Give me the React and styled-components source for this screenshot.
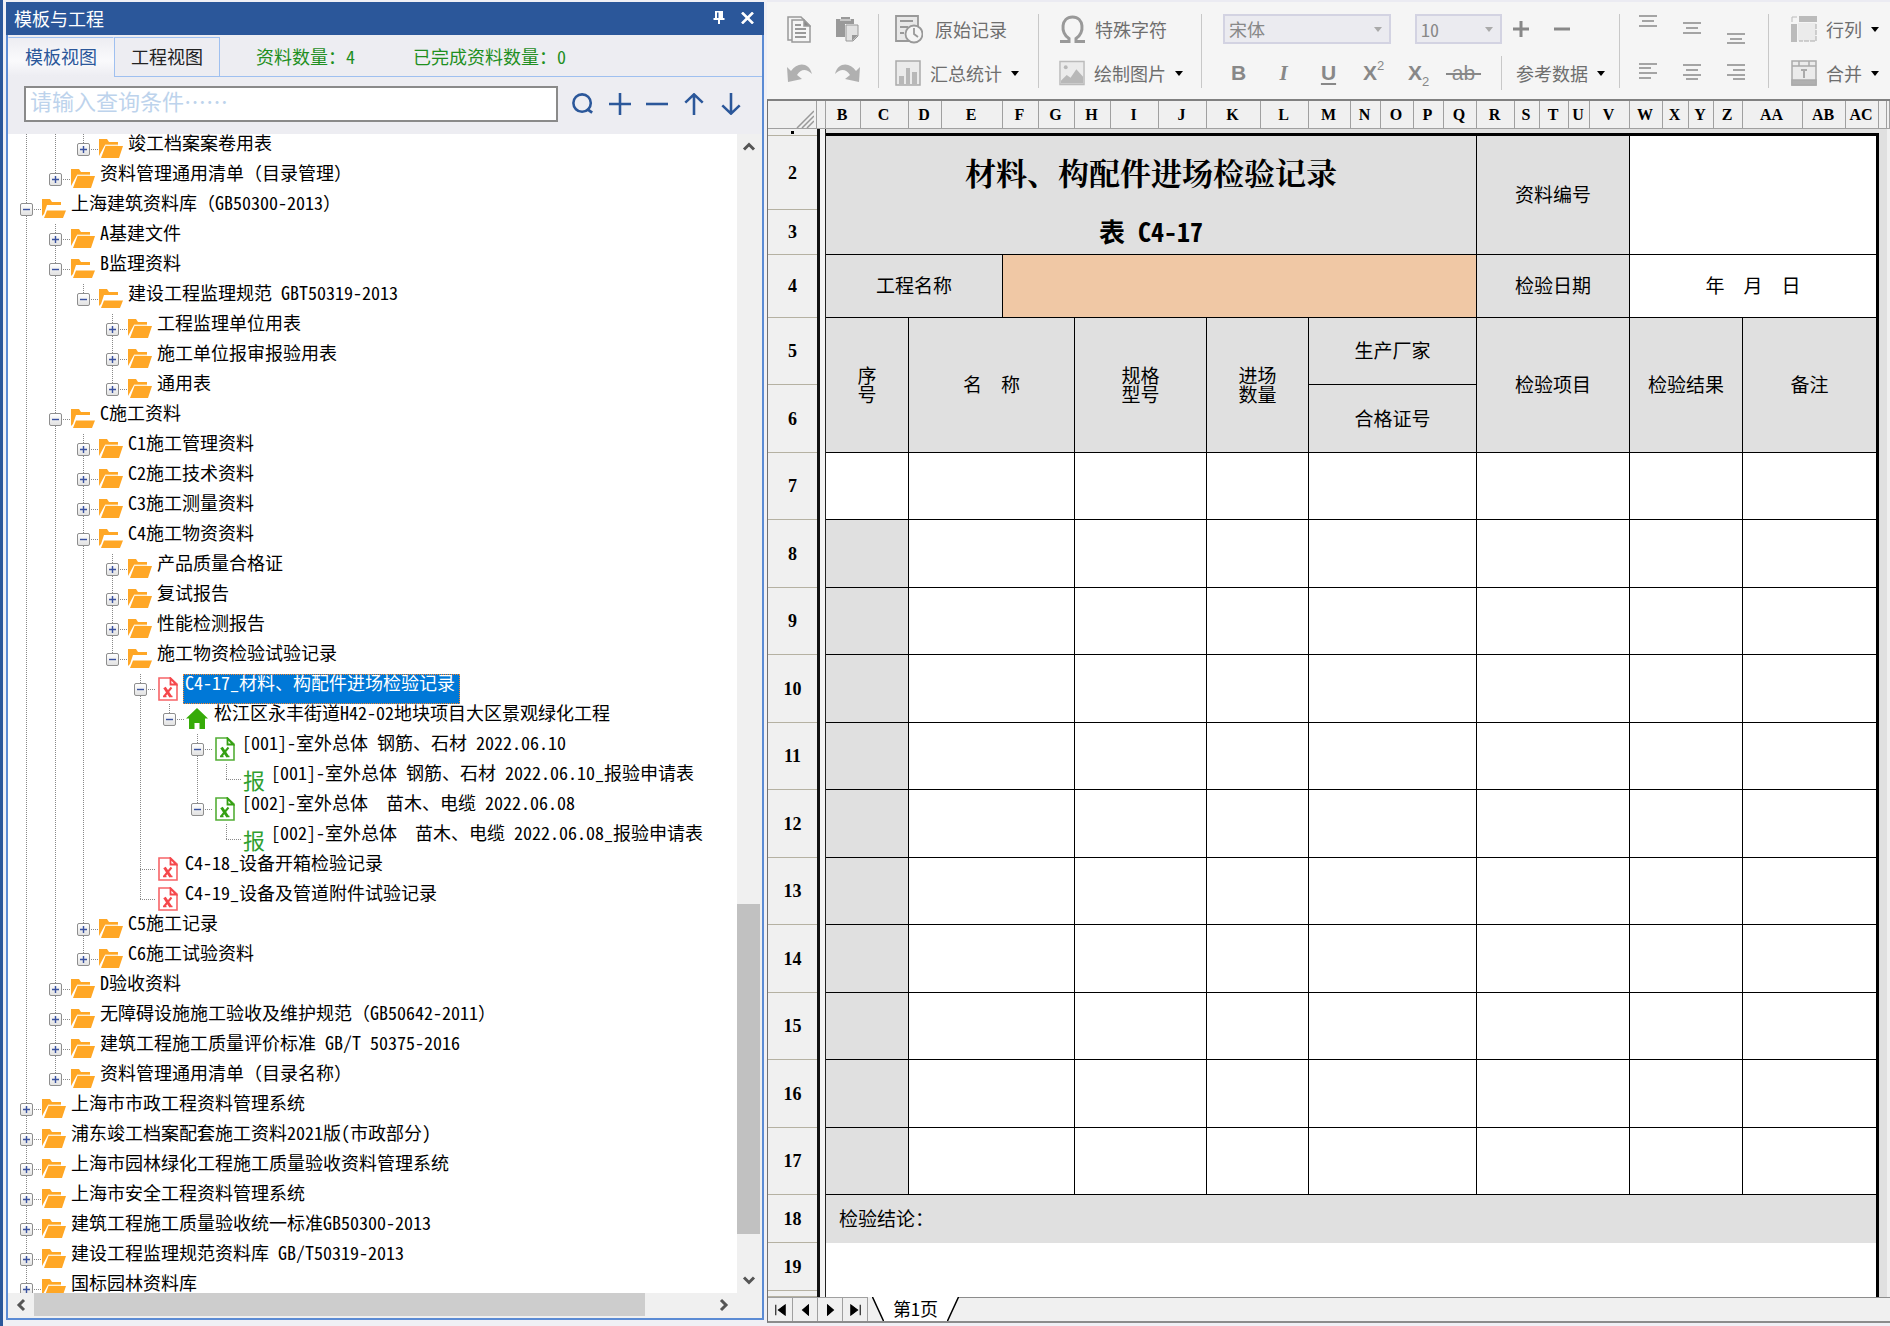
import React, { useState } from "react";
import styled, { createGlobalStyle, css } from "styled-components";

const GlobalStyle = createGlobalStyle`
* { box-sizing: border-box; }
body {
  margin: 0;
  background: #f0f0f5;
  font-family: "Noto Sans Mono CJK SC", "Noto Sans CJK SC", monospace;
  font-size: 18px;
  line-height: 18px;
}
button, input, select {
  font: inherit;
  color: inherit;
  margin: 0;
  padding: 0;
  border: 0;
  background: none;
}
`;

const TREE = [
  [2, "closed", "竣工档案案卷用表"],
  [1, "closed", "资料管理通用清单（目录管理）"],
  [0, "open", "上海建筑资料库（GB50300-2013）"],
  [1, "closed", "A基建文件"],
  [1, "open", "B监理资料"],
  [2, "open", "建设工程监理规范 GBT50319-2013"],
  [3, "closed", "工程监理单位用表"],
  [3, "closed", "施工单位报审报验用表"],
  [3, "closed", "通用表"],
  [1, "open", "C施工资料"],
  [2, "closed", "C1施工管理资料"],
  [2, "closed", "C2施工技术资料"],
  [2, "closed", "C3施工测量资料"],
  [2, "open", "C4施工物资资料"],
  [3, "closed", "产品质量合格证"],
  [3, "closed", "复试报告"],
  [3, "closed", "性能检测报告"],
  [3, "open", "施工物资检验试验记录"],
  [4, "red", "C4-17_材料、构配件进场检验记录", "minus"],
  [5, "home", "松江区永丰街道H42-02地块项目大区景观绿化工程", "minus"],
  [6, "green", "[001]-室外总体 钢筋、石材 2022.06.10", "minus"],
  [7, "report", "[001]-室外总体 钢筋、石材 2022.06.10_报验申请表"],
  [6, "green", "[002]-室外总体  苗木、电缆 2022.06.08", "minus"],
  [7, "report", "[002]-室外总体  苗木、电缆 2022.06.08_报验申请表"],
  [4, "red", "C4-18_设备开箱检验记录"],
  [4, "red", "C4-19_设备及管道附件试验记录"],
  [2, "closed", "C5施工记录"],
  [2, "closed", "C6施工试验资料"],
  [1, "closed", "D验收资料"],
  [1, "closed", "无障碍设施施工验收及维护规范（GB50642-2011）"],
  [1, "closed", "建筑工程施工质量评价标准 GB/T 50375-2016"],
  [1, "closed", "资料管理通用清单（目录名称）"],
  [0, "closed", "上海市市政工程资料管理系统"],
  [0, "closed", "浦东竣工档案配套施工资料2021版(市政部分)"],
  [0, "closed", "上海市园林绿化工程施工质量验收资料管理系统"],
  [0, "closed", "上海市安全工程资料管理系统"],
  [0, "closed", "建筑工程施工质量验收统一标准GB50300-2013"],
  [0, "closed", "建设工程监理规范资料库 GB/T50319-2013"],
  [0, "closed", "国标园林资料库"],
];

const COLUMNS = [
  ["B", 35], ["C", 48], ["D", 33], ["E", 61], ["F", 36], ["G", 36], ["H", 36],
  ["I", 48], ["J", 48], ["K", 54], ["L", 48], ["M", 42], ["N", 30], ["O", 33],
  ["P", 30], ["Q", 33], ["R", 38], ["S", 25], ["T", 29], ["U", 21], ["V", 40],
  ["W", 33], ["X", 26], ["Y", 25], ["Z", 29], ["AA", 60], ["AB", 43], ["AC", 33],
];

// column spans of the record rows
const SPANS = [2, 4, 3, 2, 5, 5, 4, 3];

// does a line at this level carry on below the given row
function continues(index, level) {
  for (let i = index + 1; i < TREE.length; i++) {
    if (TREE[i][0] < level) return false;
    if (TREE[i][0] === level) return true;
  }
  return level === 0;
}

function NodeIcon({ kind }) {
  if (kind === "closed") {
    return (
      <svg width="24" height="19" viewBox="0 0 24 19" fill="#ffa726">
        <path d="M0 0h8l2 3h9v3H6L0 17z" />
        <path d="M6.500 7H24l-4 12H2z" />
        <path d="M6 6h13" stroke="#ffe2b0" />
      </svg>
    );
  }
  if (kind === "open") {
    return (
      <svg width="24" height="19" viewBox="0 0 24 19" fill="#ffa726">
        <path d="M0 0h8l2 3h9v3H5L2 15l-2 2z" />
        <path d="M5 11.500h19l-3 7.500H2z" />
      </svg>
    );
  }
  if (kind === "home") {
    return (
      <svg width="22" height="21" viewBox="0 0 22 21" fill="#36ab08">
        <path d="M11 0l11 10.500h-3V21h-5.500v-6h-5v6H3V10.500H0z" />
      </svg>
    );
  }
  if (kind === "report") return <Report>报</Report>;
  const color = kind === "red" ? "#f5474b" : "#35a012";
  return (
    <svg width="20" height="24" viewBox="0 0 20 24" fill="none" stroke={color}>
      <path d="M1 1h11.500L19 7v16H1z" strokeWidth="1.600" opacity="0.850" />
      <path d="M12.500 1.500v6H18z" strokeWidth="1.800" />
      <path d="M6.500 10.500l6 9" strokeWidth="3" />
      <path d="M13.500 10.500l-7.500 9" strokeWidth="2" />
      <path d="M5 19.500h3.500M11 19.500h3.500" strokeWidth="1.500" />
    </svg>
  );
}

function TreeRow({ node, index, selected, onSelect }) {
  const [level, kind, label, sign] = node;
  const toggle = sign || { open: "minus", closed: "plus" }[kind];
  const parents = [];
  for (let k = 0; k < level; k++) parents.push(k);

  return (
    <Row role="treeitem" aria-level={level + 1} aria-selected={selected}>
      {parents.map((k) => (
        <Guide key={k} $wide={k % 2 === 0} $line={continues(index, k) ? "100%" : "0"} />
      ))}
      <Branch $line={continues(index, level) ? "100%" : "50%"}>
        {toggle && (
          <Toggle aria-label={toggle === "plus" ? "展开" : "折叠"}>
            <svg width="7" height="7" stroke="#3a529f" strokeWidth="1.400">
              <path d={toggle === "plus" ? "M0 3.500h7M3.500 0v7" : "M0 3.500h7"} />
            </svg>
          </Toggle>
        )}
      </Branch>
      <IconBox><NodeIcon kind={kind} /></IconBox>
      <Label $selected={selected} onClick={onSelect}>{label}</Label>
    </Row>
  );
}

function Arrow({ d }) {
  return (
    <svg width="14" height="14" viewBox="0 0 14 14" fill="none" stroke="#555" strokeWidth="3">
      <path d={d} />
    </svg>
  );
}

function SidePanel() {
  const [selected, setSelected] = useState(18);
  const [query, setQuery] = useState("");

  return (
    <Side>
      <Panel>
        <PanelTitle>
          <TitleText>模板与工程</TitleText>
          <TitleButton aria-label="固定">
            <svg width="12" height="13" viewBox="0 0 12 13" fill="#fff">
              <path d="M2 0h8v7h1.500v2H7v4H5V9H.5V7H2zM4 1.500V7h1.500V1.500z" fillRule="evenodd" />
            </svg>
          </TitleButton>
          <TitleButton aria-label="关闭">
            <svg width="13" height="12" viewBox="0 0 13 12" stroke="#fff" strokeWidth="2.600">
              <path d="M1 .5l11 11M12 .5l-11 11" />
            </svg>
          </TitleButton>
        </PanelTitle>
        <Tabs>
          <Tab $active>模板视图</Tab>
          <Tab>工程视图</Tab>
          <Stats>
            <span>资料数量：4</span>
            <span>已完成资料数量：0</span>
          </Stats>
        </Tabs>
        <SearchRow>
          <SearchInput
            aria-label="查询条件"
            placeholder="请输入查询条件……"
            value={query}
            onChange={(e) => setQuery(e.target.value)}
          />
          <SearchButton aria-label="查询">
            <svg {...searchIcon}>
              <circle cx="11" cy="11" r="9.500" />
              <path d="M16.500 17.500l5.500 4" strokeWidth="3" />
            </svg>
          </SearchButton>
          <SearchButton aria-label="添加">
            <svg {...searchIcon}><path d="M0 12h24M12 0v24" /></svg>
          </SearchButton>
          <SearchButton aria-label="删除">
            <svg {...searchIcon}><path d="M0 12h24" /></svg>
          </SearchButton>
          <SearchButton aria-label="上移">
            <svg {...searchIcon}><path d="M12 24V2M2.500 10.500L12 1.500l9.500 9" /></svg>
          </SearchButton>
          <SearchButton aria-label="下移">
            <svg {...searchIcon}><path d="M12 0v22M2.500 13.500l9.500 9 9.500-9" /></svg>
          </SearchButton>
        </SearchRow>
        <TreeArea>
          <Tree role="tree">
            {TREE.map((node, i) => (
              <TreeRow
                key={i}
                node={node}
                index={i}
                selected={selected === i}
                onSelect={() => setSelected(i)}
              />
            ))}
          </Tree>
          <VScroll>
            <ScrollButton aria-label="向上"><Arrow d="M2 9.500l5-5 5 5" /></ScrollButton>
            <Track $grow={741} />
            <Track $grow={329} $color="#c1c1c1" />
            <Track $grow={33} />
            <ScrollButton aria-label="向下"><Arrow d="M2 4.500l5 5 5-5" /></ScrollButton>
          </VScroll>
        </TreeArea>
        <HScroll>
          <ScrollButton aria-label="向左"><Arrow d="M10 2L5 7l5 5" /></ScrollButton>
          <Track $grow={609} $color="#cdcdcd" />
          <Track $grow={66} />
          <ScrollButton aria-label="向右"><Arrow d="M4 2l5 5-5 5" /></ScrollButton>
          <Corner />
        </HScroll>
      </Panel>
    </Side>
  );
}

const searchIcon = {
  width: 22,
  height: 22,
  viewBox: "0 0 24 24",
  fill: "none",
  stroke: "#2b579a",
  strokeWidth: 2.8,
};

function Caret({ color = "#000" }) {
  return (
    <svg width="8" height="5" viewBox="0 0 8 5" fill={color}>
      <path d="M0 0h8L4 5z" />
    </svg>
  );
}

// three or four horizontal strokes, given as [x1, x2, y]
function Lines({ rows }) {
  return (
    <svg width="18" height="30" stroke="#888" strokeWidth="1.500">
      {rows.map(([a, b, y]) => <path key={y} d={`M${a} ${y}H${b}`} />)}
    </svg>
  );
}

function Toolbar() {
  return (
    <Bar>
      <Group $left={8} $right={7}>
        <Line>
          <Tool $width={48} aria-label="复制">
            <svg width="24" height="27" viewBox="0 0 24 27" fill="#f5f5f5" stroke="#999" strokeWidth="1.500">
              <path d="M1 1h13l3 3v20H1z" />
              <path d="M5 4h12l6 6v16H5z" />
              <path d="M17 4v6h6z" fill="#888" />
              <path d="M8 13h11M8 17h11M8 21h11M8 9h6" strokeWidth="2" />
            </svg>
          </Tool>
          <Tool $width={48} aria-label="粘贴">
            <svg width="24" height="26" viewBox="0 0 24 26" fill="#999">
              <path d="M1 3h5V1h9v2h4v5h-9v13H1z" />
              <path d="M5 4h11" stroke="#f5f5f5" />
              <path d="M11 9h12v11l-5 5h-7z" fill="#e2e2e2" stroke="#999" />
              <path d="M17 25v-6h6z" />
            </svg>
          </Tool>
        </Line>
        <Line>
          <Tool $width={48} aria-label="撤销">
            <svg width="25" height="18" viewBox="0 0 25 18" fill="#b0b0b0">
              <path d="M0 3l4 4C10-2 22-2 25 10 19 4 14 5 10 11l5 4-14 3z" />
            </svg>
          </Tool>
          <Tool $width={48} aria-label="重做">
            <svg width="25" height="18" viewBox="0 0 25 18" fill="#b0b0b0">
              <path d="M25 3l-4 4C15-2 3-2 0 10 6 4 11 5 15 11l-5 4 14 3z" />
            </svg>
          </Tool>
        </Line>
      </Group>
      <Group $left={16} $right={19}>
        <Line>
          <Tool $gap={12}>
            <svg width="28" height="29" viewBox="0 0 28 29" fill="#e8e8e8" stroke="#999" strokeWidth="1.800">
              <path d="M1 1h22v25H1z" />
              <path d="M5 6h13M5 12h8M5 18h4" />
              <circle cx="19" cy="19" r="8.500" fill="#f5f5f5" />
              <path d="M19 13v6l4 3" fill="none" />
            </svg>
            原始记录
          </Tool>
        </Line>
        <Line>
          <Tool $gap={9}>
            <svg width="26" height="26" viewBox="0 0 26 26" fill="#b8b8b8">
              <path d="M1 1h24v24H1z" fill="#ebebeb" stroke="#aaa" strokeWidth="1.500" />
              <path d="M4 16h5v8H4zM11 8h4v16h-4zM17 12h5v12h-5z" />
            </svg>
            汇总统计
            <Caret />
          </Tool>
        </Line>
      </Group>
      <Group $left={20} $right={18}>
        <Line>
          <Tool $gap={9}>
            <svg width="27" height="28" viewBox="0 0 27 28" fill="none" stroke="#999" strokeWidth="3">
              <path d="M1 26.500h9v-3C1 18 2 2 13.500 2S26 18 17 23.500v3h9" />
            </svg>
            特殊字符
          </Tool>
        </Line>
        <Line>
          <Tool $gap={9}>
            <svg width="26" height="26" viewBox="0 0 27 26" fill="#b8b8b8">
              <path d="M1 1h25v24H1z" fill="#ebebeb" stroke="#bbb" strokeWidth="1.500" />
              <circle cx="7" cy="7" r="2" />
              <path d="M2 24v-3l6-6 4 3 6-9 7 8v7z" />
            </svg>
            绘制图片
            <Caret />
          </Tool>
        </Line>
      </Group>
      <Group $left={14} $right={14}>
        <Line $left={7}>
          <SelectBox $width={168}>
            <select aria-label="字体"><option>宋体</option></select>
            <Caret color="#aaa" />
          </SelectBox>
          <SelectGap />
          <SelectBox $width={87}>
            <select aria-label="字号"><option>10</option></select>
            <Caret color="#aaa" />
          </SelectBox>
          <Tool $width={37} aria-label="增大">
            <svg width="16" height="16" stroke="#888" strokeWidth="3"><path d="M0 8h16M8 0v16" /></svg>
          </Tool>
          <Tool $width={46} aria-label="减小">
            <svg width="16" height="16" stroke="#888" strokeWidth="3"><path d="M0 8h16" /></svg>
          </Tool>
        </Line>
        <Line>
          <Format $bold>B</Format>
          <Format $italic>I</Format>
          <Format $bold $underline>U</Format>
          <Format $bold>X<sup>2</sup></Format>
          <Format $bold>X<sub>2</sub></Format>
          <Format $strike>&nbsp;ab&nbsp;</Format>
          <Divider />
          <Tool $gap={9}>参考数据<Caret /></Tool>
        </Line>
      </Group>
      <Group $left={6} $right={10}>
        <Line>
          <Tool $width={44} aria-label="顶端对齐"><Lines rows={[[0, 18, 2], [3, 15, 7], [0, 18, 12]]} /></Tool>
          <Tool $width={44} aria-label="垂直居中"><Lines rows={[[0, 18, 9], [3, 15, 14], [0, 18, 19]]} /></Tool>
          <Tool $width={44} aria-label="底端对齐"><Lines rows={[[0, 18, 20], [3, 15, 25], [0, 18, 29]]} /></Tool>
        </Line>
        <Line>
          <Tool $width={44} aria-label="左对齐"><Lines rows={[[0, 18, 6], [0, 12, 10], [0, 18, 15], [0, 12, 20]]} /></Tool>
          <Tool $width={44} aria-label="居中"><Lines rows={[[0, 18, 7], [3, 15, 12], [0, 18, 17], [3, 15, 21]]} /></Tool>
          <Tool $width={44} aria-label="右对齐"><Lines rows={[[0, 18, 7], [6, 18, 12], [0, 18, 17], [6, 18, 21]]} /></Tool>
        </Line>
      </Group>
      <Group $left={22} $last>
        <Line>
          <Tool $gap={9}>
            <svg width="26" height="26" viewBox="0 0 26 26" fill="#bbb">
              <path d="M8 0h18v6H8zM0 8h6v18H0z" />
              <path d="M7 7h18v18H7z" fill="#ebebeb" />
              <path d="M25 8v17H8" fill="none" stroke="#aaa" strokeDasharray="5 1" />
              <path d="M1 6V1h5" fill="none" stroke="#bbb" />
            </svg>
            行列
            <Caret />
          </Tool>
        </Line>
        <Line>
          <Tool $gap={9}>
            <svg width="26" height="26" viewBox="0 0 26 26" fill="none" stroke="#aaa" strokeWidth="1.500">
              <path d="M1 1h24v24H1z" fill="#ebebeb" />
              <path d="M1 6h24M8 1v5M18 1v5" />
              <path d="M1 20h24v5H1z" fill="#b0b0b0" />
              <path d="M10 10h6M13 10v8" strokeWidth="2" />
            </svg>
            合并
            <Caret />
          </Tool>
        </Line>
      </Group>
    </Bar>
  );
}

function SheetRow({ number, height, children }) {
  return (
    <tr>
      <RowHead scope="row" $height={height}>{number}</RowHead>
      <LeftEdge />
      {children}
      <RightEdge />
      <Outside />
    </tr>
  );
}

function Sheet() {
  const records = [7, 8, 9, 10, 11, 12, 13, 14, 15, 16, 17];
  return (
    <SheetArea>
      <Grid>
        <colgroup>
          <Col $width={49} />
          <Col $width={9} />
          {COLUMNS.map(([name, width]) => <Col key={name} $width={width} />)}
          <Col $width={8} />
          <col />
        </colgroup>
        <thead>
          <tr>
            <ColHead aria-label="全选">
              <CornerMark width="18" height="18" stroke="#999" strokeWidth="1.500">
                <path d="M1 18L18 1M6 18L18 6M11 18l7-7" />
              </CornerMark>
            </ColHead>
            <ColHead />
            {COLUMNS.map(([name]) => <ColHead key={name} scope="col">{name}</ColHead>)}
            <ColHead />
            <ColHead />
          </tr>
        </thead>
        <tbody>
          <SheetRow number={<Dot />} height={7}>
            <TopEdge colSpan={28} />
          </SheetRow>
          <SheetRow number={2} height={74}>
            <Cell colSpan={16} $gray $open $title>材料、构配件进场检验记录</Cell>
            <Cell colSpan={5} rowSpan={2} $gray>资料编号</Cell>
            <Cell colSpan={7} rowSpan={2} $end />
          </SheetRow>
          <SheetRow number={3} height={45}>
            <Cell colSpan={16} $gray $subtitle>表 C4-17</Cell>
          </SheetRow>
          <SheetRow number={4} height={63}>
            <Cell colSpan={4} $gray>工程名称</Cell>
            <Cell colSpan={12} $orange />
            <Cell colSpan={5} $gray>检验日期</Cell>
            <Cell colSpan={7} $end>年　月　日</Cell>
          </SheetRow>
          <SheetRow number={5} height={67}>
            <Cell colSpan={2} rowSpan={2} $gray>序<br />号</Cell>
            <Cell colSpan={4} rowSpan={2} $gray>名　称</Cell>
            <Cell colSpan={3} rowSpan={2} $gray>规格<br />型号</Cell>
            <Cell colSpan={2} rowSpan={2} $gray>进场<br />数量</Cell>
            <Cell colSpan={5} $gray>生产厂家</Cell>
            <Cell colSpan={5} rowSpan={2} $gray>检验项目</Cell>
            <Cell colSpan={4} rowSpan={2} $gray>检验结果</Cell>
            <Cell colSpan={3} rowSpan={2} $gray $end>备注</Cell>
          </SheetRow>
          <SheetRow number={6} height={68}>
            <Cell colSpan={5} $gray>合格证号</Cell>
          </SheetRow>
          {records.map((n) => (
            <SheetRow key={n} number={n} height={n % 2 ? 67 : 68}>
              {SPANS.map((span, i) => (
                <Cell key={i} colSpan={span} $gray={i === 0 && n > 7} $end={i === 7} />
              ))}
            </SheetRow>
          ))}
          <SheetRow number={18} height={48}>
            <Cell colSpan={28} $gray $open $end $left>检验结论：</Cell>
          </SheetRow>
          <SheetRow number={19} height={48}>
            <Cell colSpan={28} $open $end />
          </SheetRow>
          <SheetRow number="" height={6}>
            <Cell colSpan={28} $open $end />
          </SheetRow>
        </tbody>
      </Grid>
    </SheetArea>
  );
}

function PageBar() {
  const nav = [
    ["首页", "M2 1v12M13 1L5 7l8 6z"],
    ["上一页", "M11 1L4 7l7 6z"],
    ["下一页", "M4 1l7 6-7 6z"],
    ["末页", "M13 1v12M2 1l8 6-8 6z"],
  ];
  return (
    <Pages>
      {nav.map(([name, d]) => (
        <NavButton key={name} aria-label={name}>
          <svg width="13" height="12" viewBox="0 0 15 14" stroke="#000" strokeWidth="1.200"><path d={d} /></svg>
        </NavButton>
      ))}
      <PageTab>
        <svg width="12" height="24" fill="#fff" stroke="#000" strokeWidth="1.500"><path d="M0 -1l12 26h2V-1" /></svg>
        <PageName>第1页</PageName>
        <svg width="12" height="24" fill="#fff" stroke="#000" strokeWidth="1.500"><path d="M12 -1L0 25h-2V-1" /></svg>
      </PageTab>
      <PageRest />
    </Pages>
  );
}

function App() {
  return (
    <>
      <GlobalStyle />
      <Layout>
        <SidePanel />
        <Main>
          <Toolbar />
          <Sheet />
          <PageBar />
        </Main>
      </Layout>
    </>
  );
}

export default App;

const Layout = styled.div`
display: grid;
grid-template-columns: minmax(0, 767fr) minmax(0, 1123fr);
height: 100vh;
`
const Side = styled.aside`
display: flex;
min-height: 0;
border-left: 3px solid #2b579a;
padding: 2px 3px 6px;
`
const Panel = styled.div`
flex: 1;
display: flex;
flex-direction: column;
min-width: 0;
border: 2px solid #5b8bd4;
border-top: 0;
background: #ededf2;
`
const PanelTitle = styled.header`
display: flex;
align-items: center;
height: 33px;
margin: 0 -2px;
padding: 0 3px 2px 8px;
background: #2b579a;
color: #fff;
`
const TitleText = styled.span`
flex: 1;
`
const TitleButton = styled.button`
display: grid;
place-items: center;
width: 28px;
height: 28px;
`
const Tabs = styled.div`
display: flex;
height: 42px;
padding-top: 2px;
`
const Tab = styled.button`
width: 106px;
padding-bottom: 3px;
border: 1px solid #9fc0f0;
color: #222;
${({ $active }) => $active && css`
  border-color: #9fc0f0 transparent transparent;
  background: linear-gradient(#ededf2, #fafafc 60%, #ededf2);
  color: #2b579a;
`}
`
const Stats = styled.div`
flex: 1;
display: flex;
align-items: center;
gap: 58px;
padding: 0 0 2px 36px;
border-bottom: 1px solid #9fc0f0;
color: #1f8f1f;
white-space: nowrap;
`
const SearchRow = styled.div`
display: flex;
align-items: center;
height: 57px;
padding: 0 13px 3px 16px;
`
const SearchInput = styled.input`
flex: 1;
min-width: 0;
height: 36px;
margin-right: 6px;
padding: 0 4px 8px;
border: 2px solid #8a8a8a;
background: #fff;
font-size: 22px;
&::placeholder {
  color: #bdd3ec;
  opacity: 1;
}
`
const SearchButton = styled.button`
display: grid;
place-items: center;
width: 37px;
height: 36px;
`
const TreeArea = styled.div`
flex: 1;
display: flex;
min-height: 0;
background: #fff;
`
const Tree = styled.ul`
flex: 1;
min-width: 0;
margin: 0;
padding: 0 0 0 4px;
overflow: hidden;
list-style: none;
`
const Row = styled.li`
display: flex;
height: 30px;
`
const dots = "#888 0 1px, transparent 1px 2px"
const Guide = styled.span`
flex: none;
width: ${({ $wide }) => ($wide ? 29 : 28)}px;
background: repeating-linear-gradient(${dots}) 14px 0 / 1px ${({ $line }) => $line} no-repeat;
`
const Branch = styled.span`
flex: none;
display: grid;
place-items: center;
width: 29px;
background:
  repeating-linear-gradient(${dots}) 14px 0 / 1px ${({ $line }) => $line} no-repeat,
  repeating-linear-gradient(90deg, ${dots}) 14px 15px / 15px 1px no-repeat;
`
const Toggle = styled.button`
display: grid;
place-items: center;
width: 13px;
height: 13px;
border: 1px solid #8e8e8e;
border-radius: 2px;
background: linear-gradient(#fff, #e2e2e2);
`
const IconBox = styled.span`
flex: none;
display: flex;
align-items: center;
justify-content: center;
width: 28px;
height: 29px;
padding-right: 2px;
`
const Report = styled.span`
color: #2fa02f;
font-size: 22px;
line-height: 26px;
`
const Label = styled.span`
height: 30px;
padding: 0 5px 0 2px;
line-height: 16px;
white-space: pre;
${({ $selected }) => $selected && css`
  background: #0078d7;
  color: #fff;
  outline: 1px dotted #ff8728;
  outline-offset: -1px;
`}
`
const VScroll = styled.div`
display: flex;
flex-direction: column;
width: 25px;
padding-right: 2px;
background: #f0f0f0;
`
const HScroll = styled.div`
display: flex;
height: 25px;
padding-bottom: 2px;
background: #f0f0f0;
`
const ScrollButton = styled.button`
display: grid;
place-items: center;
flex: 0 0 26px;
`
const Track = styled.div`
flex: ${({ $grow }) => $grow} 1 0;
background: ${({ $color }) => $color || "transparent"};
`
const Corner = styled.div`
width: 25px;
`
const Main = styled.main`
display: flex;
flex-direction: column;
min-width: 0;
min-height: 0;
padding-bottom: 3px;
`
const Bar = styled.div`
flex: none;
display: flex;
height: 99px;
padding: 12px 0 11px;
border-top: 2px solid #ebebf2;
background: #f5f5f5;
color: #6e6e6e;
overflow: hidden;
`
const Group = styled.div`
flex: none;
display: flex;
flex-direction: column;
justify-content: space-between;
padding: 0 ${({ $right }) => $right || 0}px 0 ${({ $left }) => $left}px;
border-right: ${({ $last }) => ($last ? "0" : "1px solid #c8c8c8")};
`
const Line = styled.div`
display: flex;
align-items: center;
height: 30px;
padding-left: ${({ $left }) => $left || 0}px;
`
const Tool = styled.button`
display: flex;
align-items: center;
justify-content: center;
gap: ${({ $gap }) => $gap || 0}px;
width: ${({ $width }) => ($width ? `${$width}px` : "auto")};
height: 30px;
white-space: nowrap;
`
const SelectBox = styled.span`
display: flex;
align-items: center;
width: ${({ $width }) => $width}px;
height: 30px;
padding: 0 7px 0 4px;
border: 2px solid #d3d3e2;
background: #ebebf0;
select {
  flex: 1;
  min-width: 0;
  height: 24px;
  appearance: none;
  color: #888;
}
`
const SelectGap = styled.span`
width: 24px;
`
const Format = styled.button`
width: 45px;
height: 30px;
color: #888;
font-family: "Liberation Sans", sans-serif;
font-size: 21px;
line-height: 24px;
white-space: nowrap;
font-weight: ${({ $bold }) => ($bold ? 700 : 400)};
${({ $italic }) => $italic && css`
  font-family: "Liberation Serif", serif;
  font-style: italic;
  font-weight: 700;
`}
text-decoration: ${({ $underline, $strike }) => ($underline ? "underline" : $strike ? "line-through" : "none")};
text-underline-offset: 3px;
sup, sub {
  font-size: 13px;
  font-weight: 400;
  line-height: 0;
}
sup { vertical-align: 10px; }
sub { vertical-align: -6px; }
`
const Divider = styled.span`
width: 1px;
height: 34px;
margin: 0 14px 0 15px;
background: #c8c8c8;
`
const SheetArea = styled.div`
flex: 1;
min-height: 0;
border-top: 2px solid #808080;
border-left: 1px solid #707070;
background: #f0f0f0;
overflow: hidden;
`
const Grid = styled.table`
width: 100%;
table-layout: fixed;
border-collapse: separate;
border-spacing: 0;
`
const Col = styled.col`
width: ${({ $width }) => $width}px;
`
const ColHead = styled.th`
height: 28px;
padding: 0 2px 0 0;
border-right: 1px solid #a0a0a0;
border-bottom: 1px solid #a0a0a0;
background: #f0f0f0;
font-family: "Liberation Serif", serif;
font-size: 16px;
`
const CornerMark = styled.svg`
display: block;
margin: 9px 0 0 auto;
`
const RowHead = styled.th`
height: ${({ $height }) => $height}px;
padding: 0;
border-bottom: 1px solid #b5b1a2;
background: #f0f0f0;
font-family: "Liberation Serif", serif;
font-size: 18px;
line-height: ${({ $height }) => ($height < 20 ? 1 : 18)}px;
`
const Dot = styled.span`
display: block;
width: 3px;
height: 3px;
margin: 0 auto;
background: #000;
`
const LeftEdge = styled.td`
padding: 0;
border-left: 3px solid #111;
border-right: 1px solid #222;
background: #f4f4f4;
`
const TopEdge = styled.td`
padding: 0;
border-bottom: 3px solid #000;
background: #e0e0e0;
`
const RightEdge = styled.td`
padding: 0;
background: #e0e0e0;
`
const Outside = styled.td`
padding: 0;
background: #f0f0f0;
`
const Cell = styled.td`
padding: 0 0 3px ${({ $left }) => ($left ? 13 : 0)}px;
border-right: ${({ $end }) => ($end ? "3px" : "1px")} solid #000;
border-bottom: ${({ $open }) => ($open ? "0" : "1px solid #000")};
background: ${({ $gray, $orange }) => ($orange ? "#f0c8a5" : $gray ? "#e0e0e0" : "#fff")};
color: #000;
font-size: 19px;
line-height: 19px;
text-align: ${({ $left }) => ($left ? "left" : "center")};
${({ $title }) => $title && css`
  font-family: "Noto Serif CJK SC", "Noto Sans CJK SC", serif;
  font-size: 31px;
  font-weight: 700;
  line-height: 40px;
`}
${({ $subtitle }) => $subtitle && css`
  font-size: 26px;
  font-weight: 700;
  line-height: 30px;
`}
`
const Pages = styled.nav`
flex: none;
display: flex;
height: 26px;
border-bottom: 2px solid #8c8c8c;
border-left: 1px solid #707070;
background: #f0f0f0;
`
const NavButton = styled.button`
display: grid;
place-items: center;
width: 25px;
border-top: 1px solid #a0a0a0;
border-right: 1px solid #a0a0a0;
`
const PageTab = styled.button`
display: flex;
margin-left: 4px;
`
const PageName = styled.span`
padding: 0 9px 2px;
background: #fff;
line-height: 22px;
`
const PageRest = styled.span`
flex: 1;
border-top: 1px solid #8c8c8c;
`
